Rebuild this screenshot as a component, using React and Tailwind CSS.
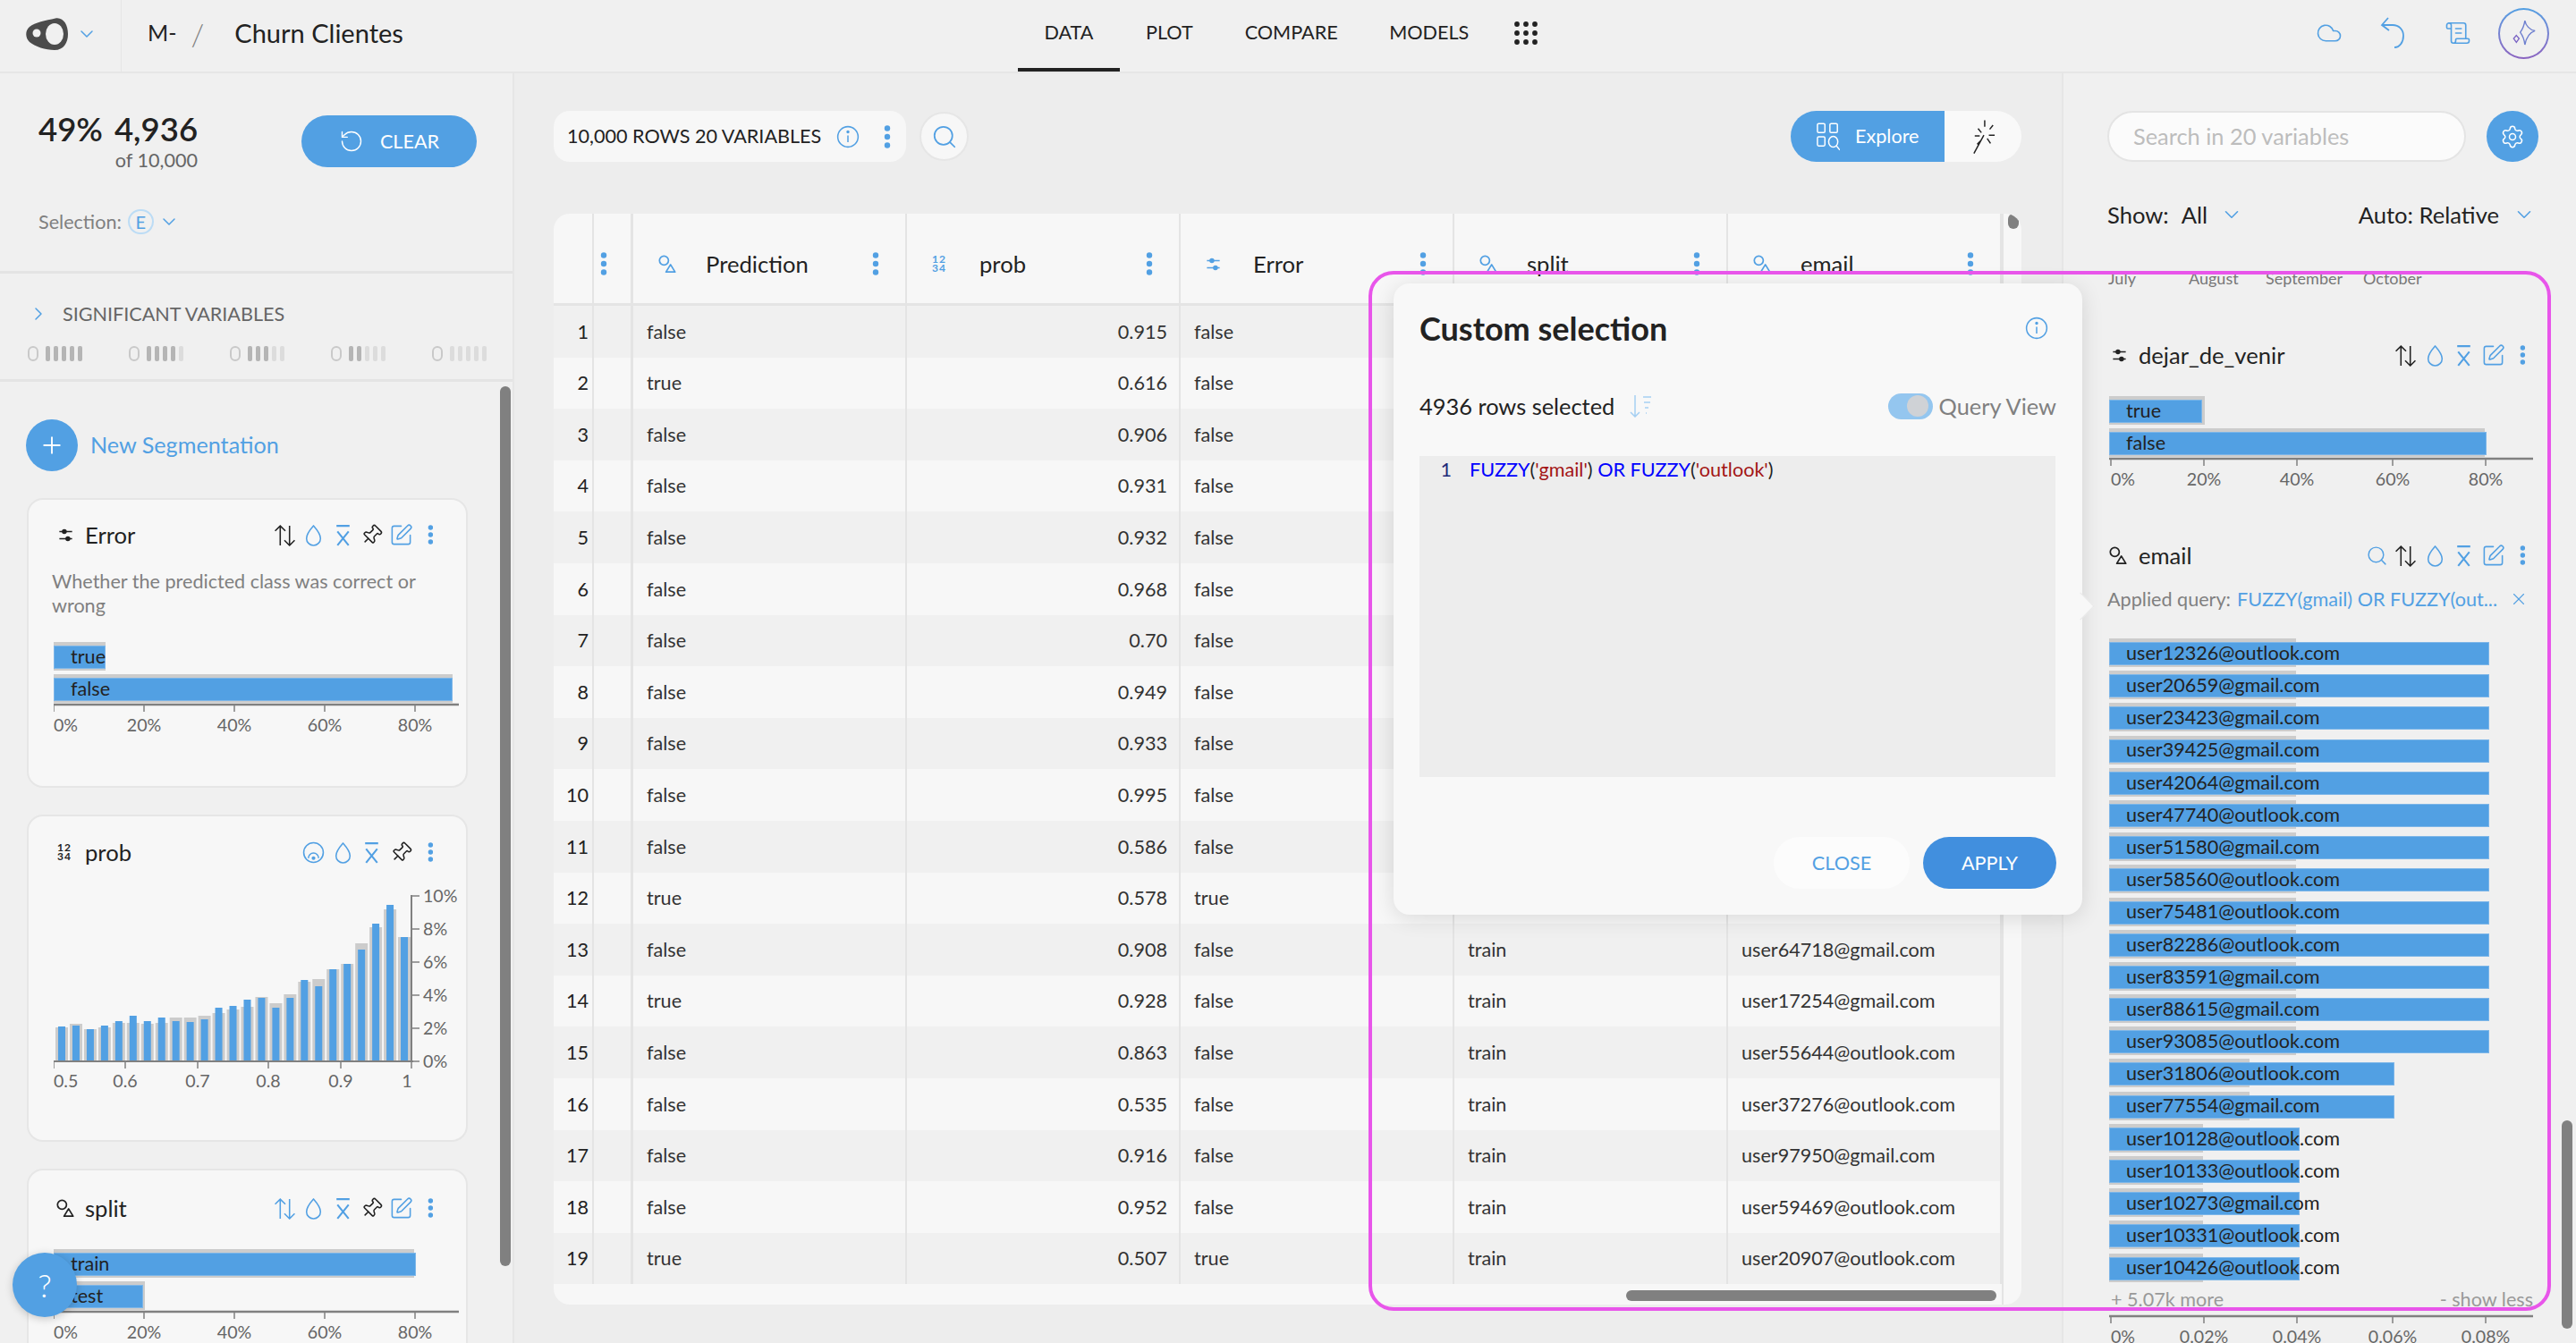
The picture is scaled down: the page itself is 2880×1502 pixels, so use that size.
import React from 'react';
import { ChevronDown, ChevronRight, Cloud, Search, Pin, SquarePen, ScrollText, Settings, RotateCcw, Plus, X } from 'lucide-react';

const TABLE_ROWS = [
  ['false', '0.915', 'false', '', ''],
  ['true', '0.616', 'false', '', ''],
  ['false', '0.906', 'false', '', ''],
  ['false', '0.931', 'false', '', ''],
  ['false', '0.932', 'false', '', ''],
  ['false', '0.968', 'false', '', ''],
  ['false', '0.70', 'false', '', ''],
  ['false', '0.949', 'false', '', ''],
  ['false', '0.933', 'false', '', ''],
  ['false', '0.995', 'false', '', ''],
  ['false', '0.586', 'false', '', ''],
  ['true', '0.578', 'true', '', ''],
  ['false', '0.908', 'false', 'train', 'user64718@gmail.com'],
  ['true', '0.928', 'false', 'train', 'user17254@gmail.com'],
  ['false', '0.863', 'false', 'train', 'user55644@outlook.com'],
  ['false', '0.535', 'false', 'train', 'user37276@outlook.com'],
  ['false', '0.916', 'false', 'train', 'user97950@gmail.com'],
  ['false', '0.952', 'false', 'train', 'user59469@outlook.com'],
  ['true', '0.507', 'true', 'train', 'user20907@outlook.com'],
];

const EMAILS = [
  ['user12326@outlook.com', 425, 209],
  ['user20659@gmail.com', 425, 209],
  ['user23423@gmail.com', 425, 209],
  ['user39425@gmail.com', 425, 209],
  ['user42064@gmail.com', 425, 209],
  ['user47740@outlook.com', 425, 209],
  ['user51580@gmail.com', 425, 209],
  ['user58560@outlook.com', 425, 209],
  ['user75481@outlook.com', 425, 209],
  ['user82286@outlook.com', 425, 209],
  ['user83591@gmail.com', 425, 209],
  ['user88615@gmail.com', 425, 209],
  ['user93085@outlook.com', 425, 209],
  ['user31806@outlook.com', 319, 157],
  ['user77554@gmail.com', 319, 157],
  ['user10128@outlook.com', 213, 105],
  ['user10133@outlook.com', 213, 105],
  ['user10273@gmail.com', 213, 105],
  ['user10331@outlook.com', 213, 105],
  ['user10426@outlook.com', 213, 105],
];

// prob histogram, tops as [blue, gray] heights in px
const HIST = [
  [39, 38], [40, 42], [36, 36], [40, 38], [45, 43], [51, 43], [45, 42], [49, 43], [45, 49], [44, 49],
  [47, 51], [60, 54], [62, 58], [69, 61], [71, 72], [60, 65], [71, 75], [91, 89], [84, 92], [103, 103],
  [109, 109], [125, 132], [154, 150], [175, 170], [139, 139],
];

const Dots = ({ h = 26, className = 'text-[#52a0e3]' }) => (
  <svg viewBox="0 0 8 26" style={{ height: h, width: (h * 8) / 26 }} className={className} fill="currentColor">
    <circle cx="4" cy="3.5" r="3.2" />
    <circle cx="4" cy="13" r="3.2" />
    <circle cx="4" cy="22.5" r="3.2" />
  </svg>
);

const CatIcon = ({ className }) => (
  <svg viewBox="0 0 24 24" className={className} fill="none" stroke="currentColor" strokeWidth="1.9">
    <circle cx="8" cy="8" r="5.5" />
    <path d="M16 13l5.5 9h-11z" strokeLinejoin="round" />
  </svg>
);

const BoolIcon = ({ className }) => (
  <svg viewBox="0 0 24 24" className={className} fill="none" stroke="currentColor" strokeWidth="2">
    <path d="M3 7h18M3 17h18" />
    <circle cx="10" cy="7" r="2.5" fill="currentColor" />
    <circle cx="15" cy="17" r="2.5" fill="currentColor" />
  </svg>
);

const NumIcon = ({ className }) => (
  <div className={`flex flex-col items-center text-[12px] leading-[10px] font-bold tracking-[1px] ${className}`}>
    <span>12</span>
    <span>34</span>
  </div>
);

const ArrowsIcon = ({ className }) => (
  <svg viewBox="0 0 24 24" className={className} fill="none" stroke="currentColor" strokeWidth="1.5">
    <path d="M7 23V2M1.5 7.5L7 2l5.5 5.5M17 2v21M11.5 17.5L17 23l5.5-5.5" />
  </svg>
);

const DropIcon = ({ className }) => (
  <svg viewBox="0 0 24 24" className={className} fill="none" stroke="currentColor" strokeWidth="1.5">
    <path d="M12 2C12 2 4.500 10.500 4.500 15.500a7.500 7.500 0 0 0 15 0C19.500 10.500 12 2 12 2z" />
  </svg>
);

const XBarIcon = ({ className }) => (
  <svg viewBox="0 0 24 24" className={className} fill="none" stroke="currentColor" strokeWidth="2">
    <path d="M5 2h14M6 8l12 15M18 8L6 23" />
  </svg>
);

const TargetIcon = ({ className }) => (
  <svg viewBox="0 0 24 24" className={className} fill="none" stroke="currentColor" strokeWidth="1.5">
    <circle cx="12" cy="12" r="10.500" />
    <path d="M6.500 18a5.500 5.500 0 0 1 11 0" />
    <circle cx="12" cy="18" r="2" fill="currentColor" stroke="none" />
  </svg>
);

const InfoIcon = ({ className }) => (
  <svg viewBox="0 0 24 24" className={className} fill="none" stroke="currentColor" strokeWidth="1.4">
    <circle cx="12" cy="12" r="10.500" />
    <path d="M12 10.500v7" />
    <circle cx="12" cy="7" r="0.9" fill="currentColor" />
  </svg>
);

const Logo = () => (
  <svg viewBox="0 0 47 36" className="w-[47px] h-[36px]">
    <path d="M4 10C10 5 22 3 33 0.500C42-1 47 8 47 18c0 10-5 18-15 18-10 0-22-4-28-9-5-5-5-13 0-17z" fill="#4b4b4b" />
    <circle cx="12" cy="17" r="4.500" fill="#f0f0f0" />
    <ellipse cx="32" cy="18" rx="10" ry="12" fill="#f0f0f0" />
  </svg>
);

const UndoIcon = ({ className }) => (
  <svg viewBox="0 0 28 36" className={className} fill="none" stroke="currentColor" strokeWidth="1.8">
    <path d="M2 9h12c7 0 12 5 12 12s-4 13-10 13M9 1L2 9l8 6" />
  </svg>
);

const StarIcon = () => (
  <svg viewBox="0 0 30 34" className="w-[26px] h-[30px]" fill="none" strokeWidth="1.6" stroke="#6d7fcf">
    <path d="M16 1c1 6 6 12 13 13-6 2-11 8-13 18-1-8-3-12-6-16 3-4 5-9 6-15z" />
    <path d="M5 20l3.500 4-3.500 5-3.500-5z" stroke="#7a63c4" />
  </svg>
);

const WandIcon = () => (
  <svg viewBox="0 0 28 44" className="w-[26px] h-[42px]" fill="none" stroke="#222" strokeWidth="1.6">
    <path d="M2 42L14 20M15 2v8M25 8l-4 5M27 20h-7M22 30l-4-6M7 12l4 5M3 21h6M6 31l4-4" />
  </svg>
);

const ExploreIcon = () => (
  <svg viewBox="0 0 28 34" className="w-[26px] h-[32px]" fill="none" stroke="#fff" strokeWidth="1.6">
    <rect x="1" y="1" width="9" height="11" rx="1.500" />
    <rect x="16" y="1" width="9" height="11" rx="1.500" />
    <rect x="1" y="17" width="9" height="11" rx="1.500" />
    <ellipse cx="20" cy="23" rx="5.500" ry="6.500" />
    <path d="M24 28l4 5" />
  </svg>
);

const SortIcon = ({ className }) => (
  <svg viewBox="0 0 26 26" className={className} fill="none" stroke="currentColor" strokeWidth="1.5">
    <path d="M7 1v24M2 20l5 5 5-5" />
    <path d="M16 3h9M17 9h7M18 15h4M19 21h1" />
  </svg>
);

const Grid9 = () => (
  <svg viewBox="0 0 26 26" className="w-[26px] h-[26px]" fill="#222">
    {[3, 13, 23].map((y) => [3, 13, 23].map((x) => <circle key={`${x}-${y}`} cx={x} cy={y} r="2.9" />))}
  </svg>
);

const Chevron = ({ className = 'w-[24px] h-[24px]' }) => (
  <ChevronDown className={`text-[#52a0e3] ${className}`} strokeWidth={1.5} />
);

const HBars = ({ rows, ticks, width }) => (
  <div>
    <div className="flex flex-col gap-[4px]">
      {rows.map((r) => (
        <div key={r.label} className="relative h-[32px]">
          <div className="absolute left-0 top-0 h-full bg-[#cccccc]" style={{ width: r.gray }} />
          <div className="absolute left-0 top-[4px] h-[26px] bg-[#52a0e3] border border-[#7db6e8]" style={{ width: r.blue }} />
          <div className="relative h-full flex items-center pl-[19px] text-[21.6px] text-[#222] whitespace-nowrap">{r.label}</div>
        </div>
      ))}
    </div>
    <svg width={width} height="38" className="block">
      <path d={`M0 2H${width}`} stroke="#808080" strokeWidth="2.5" />
      {ticks.map((t) => (
        <g key={t.label}>
          <path d={`M${t.x} 2v8`} stroke="#808080" strokeWidth="1.5" />
          <text x={t.x} y="32" fontSize="19.6" fill="#666" textAnchor={t.label === '0%' ? 'start' : 'middle'} fontFamily="Lato">
            {t.label}
          </text>
        </g>
      ))}
    </svg>
  </div>
);

const CARD_TICKS = [0, 101, 202, 303, 404].map((x, i) => ({ x, label: `${i * 20}%` }));
const SIDE_TICKS = [2, 106, 210, 317, 421].map((x, i) => ({ x, label: `${i * 20}%` }));
const EMAIL_TICKS = [
  { x: 2, label: '0%' },
  { x: 106, label: '0.02%' },
  { x: 210, label: '0.04%' },
  { x: 317, label: '0.06%' },
  { x: 421, label: '0.08%' },
];

const ProbChart = () => {
  const base = 192;
  return (
    <svg width="476" height="230" className="block">
      {HIST.map(([blue, gray], i) => {
        const x = 2 + i * 15.96;
        return (
          <g key={i}>
            <rect x={x} y={base - gray} width="14" height={gray} fill="#cccccc" />
            <rect x={x + 3} y={base - blue} width="8" height={blue} fill="#52a0e3" />
          </g>
        );
      })}
      <path d={`M0 ${base}H402M400 6V${base}`} stroke="#808080" strokeWidth="2" fill="none" />
      {[0, 2, 4, 6, 8, 10].map((p, i) => {
        const y = base - i * 37;
        return (
          <g key={p}>
            <path d={`M400 ${y}h9`} stroke="#808080" strokeWidth="1.5" />
            <text x="413" y={y + 7} fontSize="19.6" fill="#666" fontFamily="Lato">{p}%</text>
          </g>
        );
      })}
      {[['0.5', 0, 'start', 0], ['0.6', 80, 'middle', 80], ['0.7', 161, 'middle', 161], ['0.8', 240, 'middle', 240], ['0.9', 321, 'middle', 321], ['1', 400, 'middle', 395]].map(([l, x, a, tx]) => (
        <g key={l}>
          <path d={`M${x} ${base}v8`} stroke="#808080" strokeWidth="1.5" />
          <text x={tx} y={base + 29} fontSize="19.6" fill="#666" textAnchor={a} fontFamily="Lato">{l}</text>
        </g>
      ))}
    </svg>
  );
};

const CardHeader = ({ icon, title, children }) => (
  <div className="flex items-center h-[26px]">
    <div className="w-[35px] flex justify-start">{icon}</div>
    <span className="text-[25.6px] text-[#222]">{title}</span>
    <div className="ml-auto flex items-center gap-[7.5px]">{children}</div>
  </div>
);

const ic = 'w-[25px] h-[25px]';
const blue = 'text-[#52a0e3]';
const Menu = () => <div className="ml-[10px] flex"><Dots h={22} /></div>;
const Edit = () => <SquarePen className={`w-[27px] h-[27px] -mx-[1px] ${blue}`} strokeWidth={1.4} />;

const VarCard = ({ height, top = 'pt-[27px]', icon, title, actions, children }) => (
  <div className={`${height} ${top} bg-[#f7f7f7] border-2 border-[#e6e6e6] rounded-[18px] pl-[28px] pr-[36px] shrink-0`}>
    <CardHeader icon={icon} title={title}>{actions}</CardHeader>
    {children}
  </div>
);

const Indicator = ({ dark }) => (
  <div className="flex items-center gap-[8px]">
    <div className="w-[12px] h-[17px] rounded-full border-2 border-[#c9c9c9]" />
    <div className="flex gap-[4px]">
      {[0, 1, 2, 3, 4].map((i) => (
        <div key={i} className={`w-[5px] h-[17px] rounded-[2px] ${i < dark ? 'bg-[#b5b5b5]' : 'bg-[#dcdcdc]'}`} />
      ))}
    </div>
  </div>
);

const LeftPanel = () => (
  <div className="relative w-[575px] border-r-2 border-[#e6e6e6] bg-[#f0f0f0] flex flex-col shrink-0 overflow-hidden">
    <div className="h-[224px] border-b-[3px] border-[#e4e4e4] pl-[43px] pr-[40px] shrink-0">
      <div className="flex pt-[40px]">
        <div className="flex flex-col items-end">
          <div className="flex gap-[13px] text-[36.5px] leading-[44px] font-semibold text-[#222] whitespace-nowrap">
            <span>49%</span>
            <span>4,936</span>
          </div>
          <div className="text-[21.6px] leading-[26px] text-[#666]">of 10,000</div>
        </div>
        <button className="ml-auto mt-[7px] w-[196px] h-[58px] rounded-full bg-[#52a0e3] flex items-center justify-center gap-[18px] text-white text-[21.6px]">
          <RotateCcw className="w-[28px] h-[28px]" strokeWidth={1.2} />
          CLEAR
        </button>
      </div>
      <div className="flex items-center mt-[40px] text-[21.6px] text-[#808080]">
        Selection:
        <span className="ml-[7px] w-[29px] h-[28px] rounded-full border-2 border-[#bcdcf5] text-[#52a0e3] text-[20px] flex items-center justify-center">E</span>
        <Chevron className="ml-[5px] w-[24px] h-[24px]" />
      </div>
    </div>
    <div className="h-[121px] border-b-[3px] border-[#e4e4e4] pl-[31px] pr-[27px] pt-[29px] shrink-0">
      <div className="flex items-center gap-[15px] text-[21.6px] text-[#666]">
        <ChevronRight className={`w-[24px] h-[24px] ${blue}`} strokeWidth={1.5} />
        SIGNIFICANT VARIABLES
      </div>
      <div className="flex justify-between mt-[20px] pr-[2px]">
        <Indicator dark={5} />
        <Indicator dark={4} />
        <Indicator dark={3} />
        <Indicator dark={2} />
        <Indicator dark={0} />
      </div>
    </div>
    <div className="pl-[30px] pr-[50px] flex-1">
      <div className="flex items-center mt-[42px] gap-[14px] -ml-[1px]">
        <div className="w-[58px] h-[58px] rounded-full bg-[#52a0e3] flex items-center justify-center">
          <Plus className="w-[30px] h-[30px] text-white" strokeWidth={1.5} />
        </div>
        <span className={`text-[25.2px] ${blue}`}>New Segmentation</span>
      </div>
      <div className="flex flex-col gap-[30px] mt-[30px]">
        <VarCard
          height="h-[324px]"
          top="pt-[26px]"
          icon={<BoolIcon className="w-[19px] h-[19px] text-[#222] ml-[4px]" />}
          title="Error"
          actions={<>
            <ArrowsIcon className={`${ic} text-[#222]`} />
            <DropIcon className={`${ic} ${blue}`} />
            <XBarIcon className={`${ic} ${blue}`} />
            <Pin className={`${ic} text-[#222] rotate-45`} strokeWidth={1.5} />
            <Edit />
            <Menu />
          </>}
        >
          <p className="text-[21.6px] leading-[27px] text-[#808080] mt-[26px] -ml-[2px] -mr-[10px]">Whether the predicted class was correct or wrong</p>
          <div className="mt-[27px]">
            <HBars
              width={453}
              ticks={CARD_TICKS}
              rows={[
                { label: 'true', blue: 58, gray: 58 },
                { label: 'false', blue: 446, gray: 446 },
              ]}
            />
          </div>
        </VarCard>
        <VarCard
          height="h-[366px]"
          icon={<NumIcon className="text-[#222] w-[22px] items-start ml-[4px]" />}
          title="prob"
          actions={<>
            <TargetIcon className={`${ic} ${blue}`} />
            <DropIcon className={`${ic} ${blue}`} />
            <XBarIcon className={`${ic} ${blue}`} />
            <Pin className={`${ic} text-[#222] rotate-45`} strokeWidth={1.5} />
            <Menu />
          </>}
        >
          <div className="mt-[29px]">
            <ProbChart />
          </div>
        </VarCard>
        <VarCard
          height="h-[400px]"
          top="pt-[29px]"
          icon={<CatIcon className="w-[22px] h-[22px] text-[#222] ml-[2px]" />}
          title="split"
          actions={<>
            <ArrowsIcon className={`${ic} ${blue}`} />
            <DropIcon className={`${ic} ${blue}`} />
            <XBarIcon className={`${ic} ${blue}`} />
            <Pin className={`${ic} text-[#222] rotate-45`} strokeWidth={1.5} />
            <Edit />
            <Menu />
          </>}
        >
          <div className="mt-[33px]">
            <HBars
              width={453}
              ticks={CARD_TICKS}
              rows={[
                { label: 'train', blue: 405, gray: 403 },
                { label: 'test', blue: 100, gray: 102 },
              ]}
            />
          </div>
        </VarCard>
      </div>
    </div>
    {/* scroll thumb */}
    <div className="absolute left-[559px] top-[350px] w-[12px] h-[984px] rounded-full bg-[#808080]" />
  </div>
);

const colHeaders = [
  ['Prediction', 'cat'],
  ['prob', 'num'],
  ['Error', 'bool'],
  ['split', 'cat'],
  ['email', 'cat'],
];

const DataTable = () => (
  <div className="relative w-[1641px] h-[1220px] bg-[#f7f7f7] rounded-[18px] overflow-hidden">
    <div className="grid grid-cols-[45px_44px_306px_306px_306px_306px_306px] w-[1619px] h-[103px] border-b-[3px] border-[#e4e4e4]">
      <div className="border-r-2 border-[#e4e4e4]" />
      <div className="border-r-[3px] border-[#e4e4e4] flex items-center pl-[7px] pt-[12px]">
        <Dots />
      </div>
      {colHeaders.map(([name, kind]) => (
        <div key={name} className="relative border-r-2 border-[#e4e4e4] flex items-center pl-[27px] pr-[29px] pt-[12px]">
          <div className="w-[54px] shrink-0">
            {kind === 'cat' && <CatIcon className={`w-[22px] h-[22px] ${blue}`} />}
            {kind === 'num' && <NumIcon className={`${blue} w-[18px]`} />}
            {kind === 'bool' && <BoolIcon className={`w-[19px] h-[19px] ${blue}`} />}
          </div>
          <span className="text-[25.6px] text-[#222]">{name}</span>
          <div className="ml-auto"><Dots /></div>
        </div>
      ))}
    </div>
    {TABLE_ROWS.map((row, i) => (
      <div
        key={i}
        className={`grid grid-cols-[45px_44px_306px_306px_306px_306px_306px] w-[1619px] h-[57.6px] text-[21.6px] text-[#333] ${i % 2 === 0 ? 'bg-[#f0f0f0]' : 'bg-[#f7f7f7]'}`}
      >
        <div className="border-r-2 border-[#e4e4e4] flex items-center justify-end pr-[4px] text-[#222]">{i + 1}</div>
        <div className="border-r-[3px] border-[#e4e4e4]" />
        <div className="border-r-2 border-[#e4e4e4] flex items-center pl-[15px]">{row[0]}</div>
        <div className="border-r-2 border-[#e4e4e4] flex items-center justify-end pr-[13px]">{row[1]}</div>
        <div className="border-r-2 border-[#e4e4e4] flex items-center pl-[15px]">{row[2]}</div>
        <div className="border-r-2 border-[#e4e4e4] flex items-center pl-[15px]">{row[3]}</div>
        <div className="border-r-2 border-[#e4e4e4] flex items-center pl-[15px]">{row[4]}</div>
      </div>
    ))}
    {/* scrollbars */}
    <div className="absolute left-[1626px] top-0 w-[12px] h-[17px] rounded-full bg-[#808080]" />
    <div className="absolute left-[1199px] top-[1204px] w-[414px] h-[12px] rounded-full bg-[#808080]" />
    <div className="absolute left-[1619px] top-0 h-full w-[2px] bg-[#e4e4e4]" />
  </div>
);

const Main = () => (
  <div className="flex-1 bg-[#ededed] pl-[44px] pt-[42px]">
    <div className="flex items-center h-[57px]">
      <div className="w-[394px] h-[57px] rounded-[18px] bg-[#f7f7f7] flex items-center pl-[15px] text-[21.6px] text-[#222] whitespace-nowrap">
        10,000 ROWS 20 VARIABLES
        <InfoIcon className={`ml-[17px] w-[26px] h-[26px] ${blue}`} />
        <div className="ml-[27px]"><Dots /></div>
      </div>
      <div className="ml-[15px] w-[55px] h-[55px] rounded-full bg-[#f7f7f7] border-2 border-[#e6e6e6] flex items-center justify-center">
        <Search className={`w-[30px] h-[30px] ${blue}`} strokeWidth={1.4} />
      </div>
      <div className="ml-[919px] flex h-[57px] rounded-full overflow-hidden">
        <div className="w-[172px] bg-[#52a0e3] flex items-center gap-[17px] pl-[29px] text-white text-[21.6px]">
          <ExploreIcon />
          Explore
        </div>
        <div className="w-[86px] bg-[#f9f9f9] flex items-center justify-center pl-[2px]">
          <WandIcon />
        </div>
      </div>
    </div>
    <div className="mt-[58px]">
      <DataTable />
    </div>
  </div>
);

const RightPanel = () => (
  <div className="relative w-[575px] bg-[#f0f0f0] border-l-2 border-[#e6e6e6] pl-[49px] pr-[41px] shrink-0 overflow-hidden">
    <div className="flex items-center pt-[42px] gap-[23px]">
      <div className="w-[401px] h-[57px] rounded-full bg-[#fbfbfb] border-2 border-[#e4e4e4] flex items-center pl-[27px] text-[25.4px] text-[#bdbdbd]">
        Search in 20 variables
      </div>
      <div className="w-[58px] h-[57px] rounded-full bg-[#52a0e3] flex items-center justify-center">
        <Settings className="w-[28px] h-[28px] text-white" strokeWidth={1.3} />
      </div>
    </div>
    <div className="flex items-center justify-between mt-[43px] h-[32px] text-[25.6px] text-[#222] pr-[4px]">
      <div className="flex items-center">
        Show:<span className="ml-[14px]">All</span>
        <Chevron className="ml-[14px] w-[26px] h-[26px]" />
      </div>
      <div className="flex items-center">
        Auto: Relative
        <Chevron className="ml-[15px] w-[26px] h-[26px]" />
      </div>
    </div>
    <div className="flex text-[18px] leading-[20px] text-[#777] mt-[45px] ml-[1px]">
      <span className="w-[90px]">July</span>
      <span className="w-[86px]">August</span>
      <span className="w-[109px]">September</span>
      <span>October</span>
    </div>

    <div className="mt-[63px] pr-[15px]">
      <CardHeader icon={<BoolIcon className="w-[19px] h-[19px] text-[#222] ml-[4px]" />} title="dejar_de_venir">
        <ArrowsIcon className={`${ic} text-[#222]`} />
        <DropIcon className={`${ic} ${blue}`} />
        <XBarIcon className={`${ic} ${blue}`} />
        <Edit />
        <Menu />
      </CardHeader>
    </div>
    <div className="mt-[33px] ml-[2px]">
      <HBars
        width={474}
        ticks={SIDE_TICKS}
        rows={[
          { label: 'true', blue: 104, gray: 107 },
          { label: 'false', blue: 422, gray: 420 },
        ]}
      />
    </div>

    <div className="mt-[59px] pr-[15px]">
      <CardHeader icon={<CatIcon className="w-[22px] h-[22px] text-[#222] ml-[1px]" />} title="email">
        <Search className={`${ic} ${blue}`} strokeWidth={1.4} />
        <ArrowsIcon className={`${ic} text-[#222]`} />
        <DropIcon className={`${ic} ${blue}`} />
        <XBarIcon className={`${ic} ${blue}`} />
        <Edit />
        <Menu />
      </CardHeader>
    </div>
    <div className="flex items-center mt-[23px] text-[21.6px] h-[26px] pr-[12px]">
      <span className="text-[#808080]">Applied query:</span>
      <span className={`ml-[7px] ${blue}`}>FUZZY(gmail) OR FUZZY(out...</span>
      <X className={`ml-auto w-[22px] h-[22px] ${blue}`} strokeWidth={1.2} />
    </div>
    <div className="mt-[31px] ml-[2px]">
      <div className="flex flex-col gap-[4.2px]">
        {EMAILS.map(([mail, b, g]) => (
          <div key={mail} className="relative h-[32px]">
            <div className="absolute left-0 top-0 h-full bg-[#cccccc]" style={{ width: g }} />
            <div className="absolute left-0 top-[4px] h-[26px] bg-[#52a0e3] border border-[#7db6e8]" style={{ width: b }} />
            <div className="relative h-full flex items-center pl-[19px] text-[21.6px] text-[#222] whitespace-nowrap">{mail}</div>
          </div>
        ))}
      </div>
      <div className="flex justify-between text-[21.6px] leading-[26px] text-[#999] mt-[6px] pr-[7px] pl-[2px]">
        <span>+ 5.07k more</span>
        <span>- show less</span>
      </div>
      <div className="mt-[4px]">
        <HBars width={474} ticks={EMAIL_TICKS} rows={[]} />
      </div>
    </div>
    <div className="absolute left-[557px] top-[1171px] w-[12px] h-[233px] rounded-full bg-[#808080]" />
  </div>
);

export default function App() {
  return (
    <div className="relative w-[2880px] h-[1502px] overflow-hidden bg-[#ededed] font-[Lato,sans-serif] flex flex-col">
      <header className="h-[82px] shrink-0 bg-[#f0f0f0] border-b-2 border-[#e6e6e6] flex items-stretch">
        <div className="w-[136px] border-r border-[#e6e6e6] flex items-center pl-[29px] pb-[4px] gap-[9px] shrink-0">
          <Logo />
          <Chevron className="w-[24px] h-[24px]" />
        </div>
        <div className="w-[1002px] flex items-center pl-[29px] pb-[6px] text-[#222] shrink-0">
          <span className="text-[25px]">M-</span>
          <span className="ml-[16px] text-[#808080] font-light text-[34px]">/</span>
          <span className="ml-[34px] text-[29px]">Churn Clientes</span>
        </div>
        <nav className="flex text-[21.6px] text-[#222]">
          <a className="w-[114px] flex items-center justify-center pb-[3px] border-b-4 border-[#222]">DATA</a>
          <a className="px-[29px] flex items-center pb-[3px] border-b-4 border-transparent">PLOT</a>
          <a className="px-[29px] flex items-center pb-[3px] border-b-4 border-transparent">COMPARE</a>
          <a className="px-[28.500px] flex items-center pb-[3px] border-b-4 border-transparent">MODELS</a>
        </nav>
        <div className="flex items-center ml-[22px] pb-[6px]"><Grid9 /></div>
        <div className="ml-auto flex items-center pr-[30px] pb-[6px]">
          <Cloud className={`w-[30px] h-[30px] ${blue}`} strokeWidth={1.3} />
          <UndoIcon className={`ml-[42px] w-[28px] h-[36px] ${blue}`} />
          <ScrollText className={`ml-[44px] w-[30px] h-[34px] ${blue}`} strokeWidth={1.3} />
          <div className="ml-[30px] relative w-[57px] h-[57px] rounded-full p-[2px] bg-gradient-to-b from-[#52a0e3] to-[#8a63c0]">
            <div className="w-full h-full rounded-full bg-[#f0f0f0] flex items-center justify-center">
              <StarIcon />
            </div>
          </div>
        </div>
      </header>

      <div className="flex flex-1 min-h-0">
        <LeftPanel />
        <Main />
        <RightPanel />
      </div>

      {/* custom selection popover */}
      <div className="absolute left-[1558px] top-[317px] w-[770px] h-[706px] bg-[#f8f8f8] rounded-[18px] shadow-[0_4px_24px_rgba(0,0,0,0.12)] px-[29px] pt-[30px]">
        <div className="flex items-center justify-between h-[40px] pr-[9px]">
          <span className="text-[36px] font-bold text-[#222]">Custom selection</span>
          <InfoIcon className={`w-[26px] h-[26px] ${blue}`} />
        </div>
        <div className="flex items-center mt-[51px] h-[32px] text-[25.4px] text-[#222]">
          4936 rows selected
          <SortIcon className="ml-[16px] w-[26px] h-[26px] text-[#a5cff2]" />
          <div className="ml-auto w-[50px] h-[29px] rounded-full bg-[#94c6ef] flex items-center justify-end pr-[5px]">
            <div className="w-[24px] h-[24px] rounded-full bg-[#cfd2d6]" />
          </div>
          <span className="ml-[7px] text-[#808080]">Query View</span>
        </div>
        <div className="mt-[40px] w-[711px] h-[359px] bg-[#ededed] flex text-[21.6px] pt-[2px]">
          <span className="w-[56px] text-right pr-[20px] text-[#1f2a7a] leading-[26px]">1</span>
          <span className="leading-[26px]">
            <span className="text-[#0000ff]">FUZZY</span>
            <span className="text-[#222]">(</span>
            <span className="text-[#a31515]">'gmail'</span>
            <span className="text-[#222]">) </span>
            <span className="text-[#0000ff]">OR FUZZY</span>
            <span className="text-[#222]">(</span>
            <span className="text-[#a31515]">'outlook'</span>
            <span className="text-[#222]">)</span>
          </span>
        </div>
        <div className="flex justify-end gap-[15px] mt-[67px]">
          <button className="w-[152px] h-[58px] rounded-full bg-[#fcfcfc] text-[21.6px] text-[#52a0e3]">CLOSE</button>
          <button className="w-[149px] h-[58px] rounded-full bg-[#418fde] text-[21.6px] text-white">APPLY</button>
        </div>
        <div className="absolute -right-[9px] top-[350px] w-[22px] h-[22px] rotate-45 bg-[#f8f8f8] border-t border-r border-[#e8e8e8]" />
      </div>

      {/* magenta highlight frame */}
      <div className="absolute left-[1530px] top-[303px] w-[1322px] h-[1163px] border-[4px] border-[#e855ea] rounded-[28px] pointer-events-none" />

      {/* help bubble */}
      <div className="absolute left-[14px] top-[1401px] w-[72px] h-[72px] rounded-full bg-[#52a0e3] shadow-[0_2px_10px_rgba(0,0,0,0.2)] flex items-center justify-center text-white text-[36px] font-light">
        ?
      </div>
    </div>
  );
}
